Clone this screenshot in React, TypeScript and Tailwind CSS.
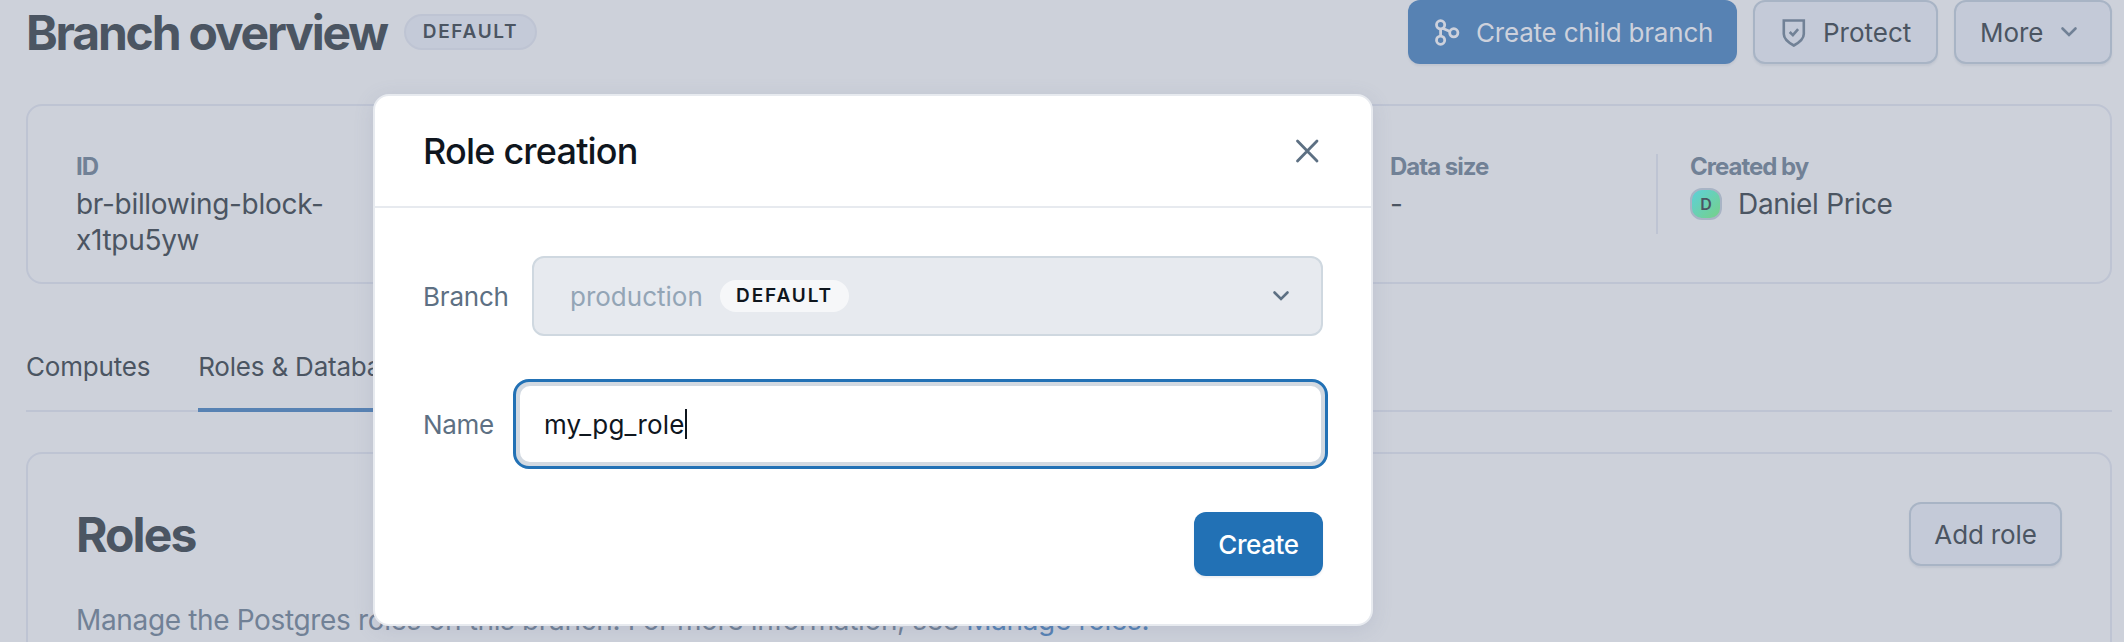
import React from 'react';

const BranchIcon: React.FC = () => (
  <svg width="32" height="32" viewBox="0 0 32 32" fill="none" stroke="currentColor" strokeWidth="2.8">
    <circle cx="9.6" cy="8.8" r="4.1" />
    <circle cx="9.6" cy="24.2" r="4.1" />
    <circle cx="22.8" cy="16.8" r="4.1" />
    <path d="M9.6 12.9v7.200M11.500 12.300l7.500 3.200" />
  </svg>
);

const ShieldIcon: React.FC = () => (
  <svg width="32" height="32" viewBox="0 0 32 32" fill="none" stroke="currentColor" strokeWidth="2.6">
    <path d="M5.8 4.500h20v13.500c0 5-4.500 8.500-10 11.500-5.500-3-10-6.500-10-11.500z" />
    <path d="M11.700 16l3.200 3.200 5.200-6" />
  </svg>
);

const ChevronIcon: React.FC = () => (
  <svg width="20" height="20" viewBox="0 0 20 20" fill="none" stroke="currentColor" strokeWidth="2.6">
    <path d="M3.500 6.500l6.500 6.500 6.500-6.500" strokeLinecap="round" />
  </svg>
);

const CloseIcon: React.FC = () => (
  <svg width="24" height="24" viewBox="0 0 24 24" fill="none" stroke="currentColor" strokeWidth="2.8">
    <path d="M2.500 2l19.500 20M22 2L2.500 22" strokeLinecap="round" />
  </svg>
);

const Header: React.FC = () => (
  <header className="flex h-16 items-center justify-between">
    <div className="flex items-center">
      <h1 className="w-[378px] pt-[2px] text-[48px] leading-[64px] font-bold tracking-[-2.2px]">Branch overview</h1>
      <span className="flex h-9 w-[133px] items-center justify-center rounded-full border-2 border-[#bec4d3] bg-[#c4cad8] text-[19px] font-semibold tracking-[1.7px]">
        DEFAULT
      </span>
    </div>
    <div className="flex gap-4">
      <button className="flex h-16 w-[329px] items-center rounded-xl bg-[#5782b3] pl-[23px] text-[26px] tracking-[-0.2px] text-[#cdd1dc] shadow-[0_2px_2px_rgba(90,100,130,0.1)]">
        <BranchIcon />
        <span className="ml-[13px]">Create child branch</span>
      </button>
      <button className="flex h-16 w-[185px] items-center rounded-xl border-2 border-[#a8b4c5] bg-[#c4cad8] pl-[23px] text-[26px] shadow-[0_2px_2px_rgba(90,100,130,0.1)]">
        <span className="text-[#718196]"><ShieldIcon /></span>
        <span className="ml-[13px]">Protect</span>
      </button>
      <button className="flex h-16 w-[158px] items-center rounded-xl border-2 border-[#a8b4c5] bg-[#c4cad8] pl-6 text-[26px] tracking-[-0.1px] shadow-[0_2px_2px_rgba(90,100,130,0.1)]">
        <span>More</span>
        <span className="ml-[16px] text-[#718196]"><ChevronIcon /></span>
      </button>
    </div>
  </header>
);

const BranchInfo: React.FC = () => (
  <section className="mt-10 flex h-[180px] rounded-2xl border-2 border-[#bec4d3] px-12 pt-12 text-[28px] leading-9 tracking-[-0.3px]">
    <div className="w-[267px]">
      <h3 className="h-8 text-2xl leading-[26px] font-bold tracking-[-1px] text-[#718196]">ID</h3>
      <p>br-billowing-block-x1tpu5yw</p>
    </div>
    <div className="ml-auto h-[80px] w-[268px] border-r-2 border-[#bec4d3]">
      <h3 className="h-8 text-2xl leading-[26px] font-bold tracking-[-1px] text-[#718196]">Data size</h3>
      <p>-</p>
    </div>
    <div className="w-[404px] pl-8">
      <h3 className="h-8 text-2xl leading-[26px] font-bold tracking-[-1px] text-[#718196]">Created by</h3>
      <div className="flex items-center">
        <span className="flex h-8 w-8 items-center justify-center rounded-xl border-2 border-[#a8b4c5] bg-linear-to-br from-[#5dd0d8] to-[#76d087] text-[16px] leading-none font-semibold tracking-normal">
          D
        </span>
        <span className="ml-4">Daniel Price</span>
      </div>
    </div>
  </section>
);

const Tabs: React.FC = () => (
  <nav className="mt-[50px] flex h-[78px] gap-12 border-b-2 border-[#bec4d3] pt-4 text-[26px] leading-[34px] tracking-[-0.2px]">
    <span>Computes</span>
    <span className="-mb-[2px] border-b-4 border-[#5782b3]">Roles &amp; Databases</span>
  </nav>
);

const Roles: React.FC = () => (
  <section className="mt-10 h-[260px] rounded-2xl border-2 border-[#bec4d3] px-12 pt-12">
    <div className="flex h-16 items-center justify-between">
      <h2 className="pt-[1px] text-[48px] leading-[64px] font-bold tracking-[-1.9px]">Roles</h2>
      <button className="h-16 w-[153px] rounded-xl border-2 border-[#a8b4c5] bg-[#c4cad8] text-[26px] tracking-[-0.15px] shadow-[0_2px_2px_rgba(90,100,130,0.1)]">
        Add role
      </button>
    </div>
    <p className="mt-9 text-[28px] leading-9 tracking-[-0.35px] text-[#718196]">
      Manage the Postgres roles on this branch. For more information, see <a className="text-[#5782b3]">Manage roles.</a>
    </p>
  </section>
);

const RoleDialog: React.FC = () => (
  <div
    role="dialog"
    className="absolute top-[94px] left-[373px] h-[532px] w-[1000px] rounded-2xl border-2 border-[#e7eaef] bg-white text-[26px] text-[#0f161e] shadow-[0_4px_20px_rgba(100,110,150,0.15)]"
  >
    <div className="flex h-[112px] items-center justify-between border-b-2 border-[#e7eaef] pr-[52px] pl-12">
      <h2 className="text-[36px] font-medium tracking-[-0.8px]">Role creation</h2>
      <button className="text-[#5d7083]"><CloseIcon /></button>
    </div>
    <form className="pt-12 pr-12 pl-12">
      <div className="flex items-center">
        <label className="w-[109px] tracking-[-0.2px] text-[#5d7083]">Branch</label>
        <div className="flex h-20 flex-1 items-center rounded-xl border-2 border-[#cfd8e0] bg-[#e7eaef] pr-[30px] pl-[36px]">
          <span className="w-[150px] text-[#93a5b6]">production</span>
          <span className="flex h-8 w-[129px] items-center justify-center rounded-full bg-[#f6f7f9] text-[19px] font-semibold tracking-[1.9px]">
            DEFAULT
          </span>
          <span className="ml-auto text-[#5d7083]"><ChevronIcon /></span>
        </div>
      </div>
      <div className="mt-[43px] -mr-[5px] flex items-center">
        <label className="w-[90px] tracking-[-0.3px] text-[#5d7083]">Name</label>
        <div className="flex-1 rounded-2xl border-3 border-[#2271b5] bg-[#d2d9e1] p-1">
          <div className="flex h-[76px] items-center rounded-[10px] bg-white pl-6 tracking-[0.2px]">
            my_pg_role
            <span className="h-[30px] w-[2px] bg-[#0f161e]" />
          </div>
        </div>
      </div>
      <button type="button" className="mt-[43px] ml-auto block h-16 w-[129px] rounded-xl bg-[#2271b5] text-[26px] font-medium tracking-[-0.4px] text-white shadow-[0_2px_2px_rgba(90,100,130,0.1)]">
        Create
      </button>
    </form>
  </div>
);

const App: React.FC = () => {
  return (
    <div className="relative h-[642px] w-[2124px] overflow-hidden bg-[#cdd1da] pr-3 pl-[26px] font-['Inter',sans-serif] text-[#4b5562]">
      <Header />
      <BranchInfo />
      <Tabs />
      <Roles />
      <RoleDialog />
    </div>
  );
};

export default App;
